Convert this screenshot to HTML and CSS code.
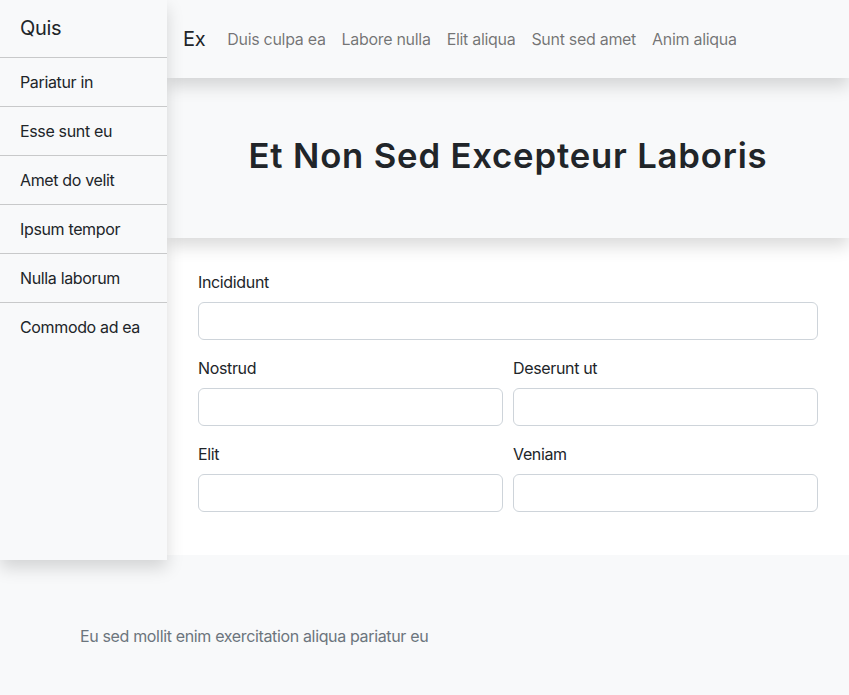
FILE: index.html
```html
<!DOCTYPE html>
<html lang="en">
<head>
<meta charset="utf-8">
<title>Quis</title>
<link rel="stylesheet" href="styles.css">
</head>
<body>
<aside class="sidebar">
  <div class="sidebar-title">Quis</div>
  <ul class="sidebar-list">
    <li>Pariatur in</li>
    <li>Esse sunt eu</li>
    <li>Amet do velit</li>
    <li>Ipsum tempor</li>
    <li>Nulla laborum</li>
    <li>Commodo ad ea</li>
  </ul>
</aside>
<div class="main">
  <nav class="navbar">
    <span class="brand">Ex</span>
    <a class="nav-link">Duis culpa ea</a>
    <a class="nav-link">Labore nulla</a>
    <a class="nav-link">Elit aliqua</a>
    <a class="nav-link">Sunt sed amet</a>
    <a class="nav-link">Anim aliqua</a>
  </nav>
  <header class="hero">
    <h1>Et Non Sed Excepteur Laboris</h1>
  </header>
  <section class="form-section">
    <form class="form-grid">
      <div class="group full">
        <label>Incididunt</label>
        <input type="text">
      </div>
      <div class="group">
        <label>Nostrud</label>
        <input type="text">
      </div>
      <div class="group">
        <label>Deserunt ut</label>
        <input type="text">
      </div>
      <div class="group">
        <label>Elit</label>
        <input type="text">
      </div>
      <div class="group">
        <label>Veniam</label>
        <input type="text">
      </div>
    </form>
  </section>
</div>
<footer class="footer">
  <p>Eu sed mollit enim exercitation aliqua pariatur eu</p>
</footer>
</body>
</html>
```
FILE: styles.css
```css
* { box-sizing: border-box; }
html, body { margin: 0; padding: 0; }
body {
  font-family: Inter, "Noto Sans", "Liberation Sans", sans-serif;
  font-size: 16px;
  line-height: 24px;
  letter-spacing: -0.35px;
  color: #212529;
  background: #f8f9fa;
}
.sidebar {
  position: absolute;
  left: 0;
  top: 0;
  width: 167px;
  height: 560px;
  background: #f8f9fa;
  box-shadow: 0 8px 16px rgba(0,0,0,.15);
  z-index: 10;
}
.sidebar-title {
  font-size: 20px;
  line-height: 24px;
  padding: 16px 20px 17px;
  border-bottom: 1px solid #c8c9ca;
}
.sidebar-list {
  list-style: none;
  margin: 0;
  padding: 0;
}
.sidebar-list li {
  padding: 12px 20px;
  border-bottom: 1px solid #c8c9ca;
}
.sidebar-list li:last-child { border-bottom: none; }
.main {
  margin-left: 167px;
  background: #fff;
}
.navbar {
  position: relative;
  z-index: 3;
  height: 78px;
  display: flex;
  align-items: center;
  padding: 0 16px;
  background: #f8f9fa;
  box-shadow: 0 8px 16px rgba(0,0,0,.15);
}
.brand {
  font-size: 20px;
  line-height: 30px;
  margin-right: 14px;
  color: #212529;
}
.nav-link {
  padding: 8px;
  letter-spacing: -0.3px;
  color: rgba(0,0,0,.55);
}
.hero {
  position: relative;
  z-index: 2;
  height: 160px;
  display: flex;
  align-items: center;
  justify-content: center;
  background: #f8f9fa;
  box-shadow: 0 8px 16px rgba(0,0,0,.15);
}
.hero h1 {
  margin: 0 0 4px;
  font-size: 34.7px;
  line-height: 1.2;
  font-weight: 600;
  letter-spacing: 0.82px;
}
.form-section {
  position: relative;
  z-index: 1;
  background: #fff;
  padding: 32px 31px 43px;
}
.form-grid {
  display: grid;
  grid-template-columns: 1fr 1fr;
  column-gap: 10px;
  row-gap: 16px;
}
.group { display: flex; flex-direction: column; }
.group.full { grid-column: 1 / 3; }
.group label {
  margin-bottom: 8px;
}
.group input {
  height: 38px;
  border: 1px solid #ced4da;
  border-radius: 6px;
  background: #fff;
  font: inherit;
  padding: 6px 12px;
}
.footer {
  background: #f8f9fa;
  padding: 69px 80px 47px;
  color: #6c757d;
}
.footer p { margin: 0; }
```
